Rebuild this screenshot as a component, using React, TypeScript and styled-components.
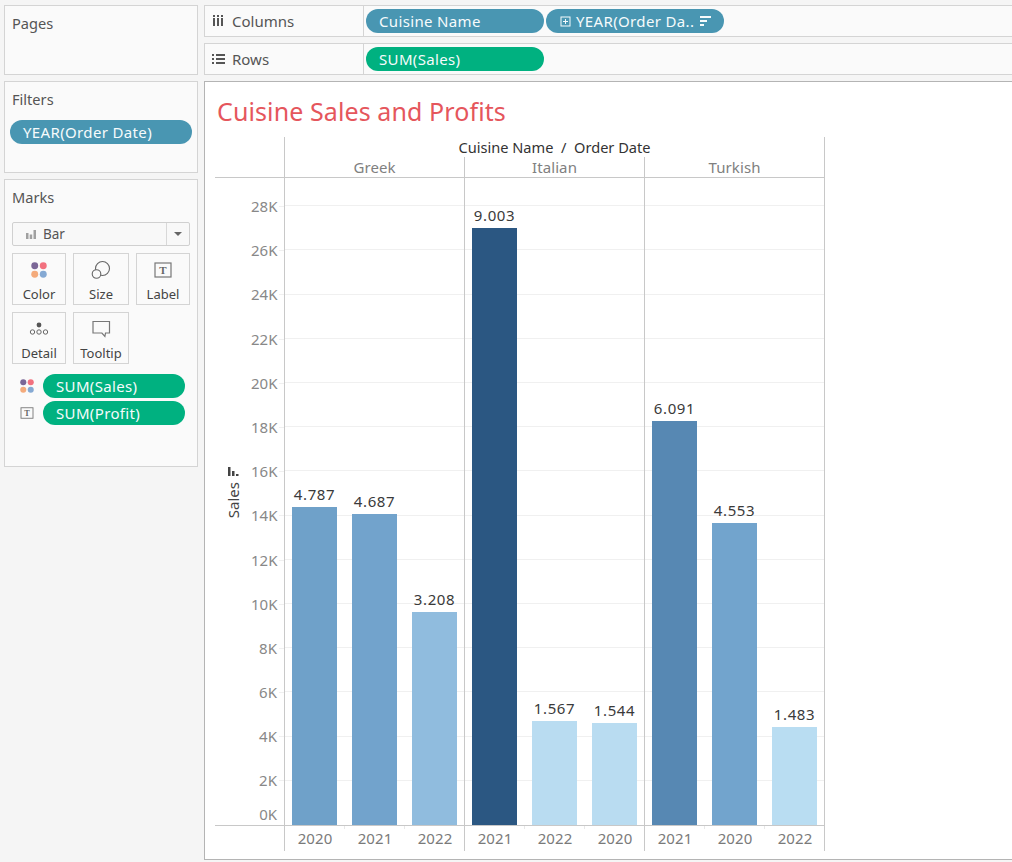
import React from "react";
import styled, { createGlobalStyle } from "styled-components";

const Global = createGlobalStyle`
  html, body { margin: 0; padding: 0; background: #f5f5f5; overflow: hidden; }
  body { font-family: "Noto Sans", "Open Sans", Arial, sans-serif; width: 1012px; height: 862px; }
  * { box-sizing: border-box; }
`;

const Page = styled.div`
  display: grid;
  grid-template-columns: 194px 812px;
  column-gap: 6px;
  padding: 5px 0 0 4px;
  width: 1012px;
  height: 862px;
  overflow: hidden;
  background: #f5f5f5;
`;
const Side = styled.div`
  display: flex;
  flex-direction: column;
`;
const Main = styled.div`
  display: flex;
  flex-direction: column;
`;
const Card = styled.section<{ $h: number; $mb: number }>`
  height: ${(p) => p.$h}px;
  margin-bottom: ${(p) => p.$mb}px;
  background: #fafafa;
  border: 1px solid #d4d4d4;
  padding: 7px 7px 0 7px;
`;
const CardTitle = styled.div`
  font-size: 14.6px;
  line-height: 20px;
  color: #555;
`;
const FilterPill = styled.div`
  margin: 11px 0 0 -2px;
  width: 182px;
  height: 24px;
  border-radius: 12px;
  background: #4996b2;
  color: #f6fbfc;
  font-size: 15px;
  letter-spacing: 0.35px;
  line-height: 24px;
  padding-left: 13px;
`;
const Dropdown = styled.div`
  margin-top: 15px;
  width: 178px;
  height: 24px;
  background: #f8f8f8;
  border: 1px solid #d0d0d0;
  border-radius: 2px;
  display: flex;
  align-items: center;
  font-size: 13.5px;
  color: #555;
`;
const DropLabel = styled.div`
  flex: 1;
  display: flex;
  align-items: center;
  gap: 7px;
  padding-left: 13px;
  height: 100%;
  border-right: 1px solid #d8d8d8;
`;
const DropArrow = styled.div`
  width: 22px;
  display: flex;
  justify-content: center;
  &::after {
    content: "";
    border-left: 4px solid transparent;
    border-right: 4px solid transparent;
    border-top: 4px solid #666;
  }
`;
const MarkGrid = styled.div`
  margin-top: 7px;
  display: grid;
  grid-template-columns: 54px 56px 54px;
  grid-auto-rows: 52px;
  gap: 7px;
`;
const MarkBtn = styled.div`
  border: 1px solid #d4d4d4;
  background: #fafafa;
  display: flex;
  flex-direction: column;
  align-items: center;
  padding-top: 6px;
  font-size: 13px;
  line-height: 16px;
  color: #444;
  svg { height: 20px; margin-bottom: 6px; display: block; }
`;
const MarkRows = styled.div`
  margin-top: 10px;
  display: flex;
  flex-direction: column;
  gap: 3px;
`;
const MarkRow = styled.div`
  display: flex;
  align-items: center;
  height: 24px;
  padding-left: 7px;
`;
const MarkIcon = styled.div`
  width: 16px;
  margin-right: 8px;
  display: flex;
  justify-content: center;
`;
const Pill = styled.div<{ $kind: "dim" | "mea"; $w?: number }>`
  width: ${(p) => p.$w ?? 178}px;
  height: 24px;
  border-radius: 12px;
  background: ${(p) => (p.$kind === "dim" ? "#4996b2" : "#00b180")};
  color: #f6fbfc;
  font-size: 15px;
  letter-spacing: 0.35px;
  line-height: 24px;
  padding-left: 13px;
  display: flex;
  align-items: center;
  white-space: nowrap;
`;
const Shelf = styled.div<{ $mb: number }>`
  height: 32px;
  margin-bottom: ${(p) => p.$mb}px;
  background: #fafafa;
  border: 1px solid #d4d4d4;
  border-right: none;
  display: flex;
  align-items: center;
`;
const ShelfHead = styled.div`
  width: 159px;
  height: 100%;
  border-right: 1px solid #d4d4d4;
  display: flex;
  align-items: center;
  padding-left: 7px;
  font-size: 15px;
  color: #555;
`;
const ShelfIcon = styled.span`
  width: 20px;
  display: flex;
`;
const ShelfPills = styled.div`
  display: flex;
  gap: 2px;
  padding-left: 2px;
`;
const View = styled.div`
  height: 779px;
  background: #fff;
  border: 1px solid #b4b4b4;
  border-right: none;
  padding: 12px 0 0 10px;
`;
const Title = styled.h1`
  margin: 0 0 0 2px;
  height: 43px;
  font-size: 25px;
  letter-spacing: 0.1px;
  line-height: 34px;
  font-weight: 400;
  color: #e5565c;
`;
const Chart = styled.div`
  width: 610px;
  display: grid;
  grid-template-columns: 70px repeat(3, 180px);
`;
const HeadSpacer = styled.div`
  grid-row: 1 / span 2;
  border-right: 1px solid #c8c8c8;
  border-bottom: 1px solid #c8c8c8;
`;
const FieldHead = styled.div`
  grid-column: 2 / span 3;
  height: 20px;
  text-align: center;
  font-size: 14.6px;
  line-height: 21px;
  color: #333;
  border-right: 1px solid #c8c8c8;
`;
const PaneHead = styled.div`
  height: 21px;
  text-align: center;
  font-size: 15px;
  letter-spacing: 0.1px;
  line-height: 20px;
  color: #808080;
  border-right: 1px solid #c8c8c8;
  border-bottom: 1px solid #c8c8c8;
`;
const AxisCell = styled.div`
  height: 648px;
  display: flex;
  border-right: 1px solid #c8c8c8;
  border-bottom: 1px solid #c8c8c8;
`;
const AxisTitle = styled.div`
  width: 36px;
  display: flex;
  align-items: center;
  justify-content: center;
  flex-direction: column-reverse;
  padding-bottom: 18px;
  gap: 6px;
  font-size: 15px;
  color: #444;
  span { writing-mode: vertical-rl; transform: rotate(180deg); line-height: 16px; }
`;
const Ticks = styled.div`
  width: 33px;
  padding-top: 6px;
`;
const Tick = styled.div<{ $last?: boolean }>`
  height: ${(p) => (p.$last ? 22 : 44.2)}px;
  line-height: ${(p) => (p.$last ? 22 : 44.2)}px;
  position: relative;
  padding-right: 7px;
  text-align: right;
  font-size: 15px;
  color: #888;
  white-space: nowrap;
  &::after {
    content: "";
    display: ${(p) => (p.$last ? "none" : "block")};
    position: absolute;
    right: 0;
    top: 22px;
    width: 5px;
    height: 1px;
    background: #f0f0f0;
  }
`;
const Pane = styled.div`
  height: 648px;
  display: flex;
  align-items: flex-end;
  gap: 15px;
  padding: 0 7px 0 7px;
  border-right: 1px solid #c8c8c8;
  border-bottom: 1px solid #c8c8c8;
  background-color: #fff;
  background-image: repeating-linear-gradient(
    to top,
    transparent 0,
    transparent 43.2px,
    #f0f0f0 43.2px,
    #f0f0f0 44.2px
  );
  background-position: 0 -1px;
  background-size: 100% 100%;
`;
const BarCol = styled.div`
  width: 45px;
  display: flex;
  flex-direction: column;
  align-items: center;
`;
const BarValue = styled.div`
  font-size: 15px;
  letter-spacing: 0.6px;
  line-height: 20px;
  margin-bottom: 3px;
  color: #3a3a3a;
`;
const Bar = styled.div`
  width: 45px;
`;
const FootSpacer = styled.div`
  border-right: 1px solid #c8c8c8;
`;
const Foot = styled.div`
  height: 25px;
  display: grid;
  grid-template-columns: repeat(3, 60px);
  border-right: 1px solid #c8c8c8;
`;
const FootLabel = styled.div`
  text-align: center;
  font-size: 15px;
  letter-spacing: 0.1px;
  line-height: 25px;
  color: #7a7a7a;
  position: relative;
  &:not(:last-child)::after {
    content: "";
    position: absolute;
    right: 0;
    top: 0;
    width: 1px;
    height: 3px;
    background: #e8e8e8;
  }
`;

const ColorDots = ({ s = 16 }: { s?: number }) => (
  <svg width={s} height={s} viewBox="0 0 18 18">
    <circle cx="4.200" cy="4.200" r="3.900" fill="#7b6797" />
    <circle cx="13.800" cy="4.200" r="3.900" fill="#f2717f" />
    <circle cx="4.200" cy="13.800" r="3.900" fill="#f4ab7c" />
    <circle cx="13.800" cy="13.800" r="3.900" fill="#85a9d3" />
  </svg>
);
const TextBox = ({ w, h }: { w: number; h: number }) => (
  <svg width={w} height={h} viewBox="0 0 18 16">
    <rect x="1" y="1" width="16" height="14" fill="none" stroke="#777" strokeWidth="1.2" />
    <text x="9" y="12" textAnchor="middle" fontFamily="'Liberation Serif', serif" fontWeight="700" fontSize="11" fill="#666">T</text>
  </svg>
);

const fmtTicks = [28, 26, 24, 22, 20, 18, 16, 14, 12, 10, 8, 6, 4, 2];
const panes = [
  { name: "Greek", bars: [
    { y: "2020", v: "4.787", h: 318, c: "#6fa1c9" },
    { y: "2021", v: "4.687", h: 311, c: "#72a3cc" },
    { y: "2022", v: "3.208", h: 213, c: "#90bcde" },
  ] },
  { name: "Italian", bars: [
    { y: "2021", v: "9.003", h: 597, c: "#2b5782" },
    { y: "2022", v: "1.567", h: 104, c: "#b9dcf1" },
    { y: "2020", v: "1.544", h: 102, c: "#b9dcf1" },
  ] },
  { name: "Turkish", bars: [
    { y: "2021", v: "6.091", h: 404, c: "#5788b3" },
    { y: "2020", v: "4.553", h: 302, c: "#72a4cd" },
    { y: "2022", v: "1.483", h: 98, c: "#b9ddf2" },
  ] },
];

export default function App() {
  return (
    <Page>
      <Global />
      <Side>
        <Card $h={70} $mb={6}><CardTitle>Pages</CardTitle></Card>
        <Card $h={92} $mb={6}>
          <CardTitle>Filters</CardTitle>
          <FilterPill>YEAR(Order Date)</FilterPill>
        </Card>
        <Card $h={288} $mb={0}>
          <CardTitle>Marks</CardTitle>
          <Dropdown>
            <DropLabel>
              <svg width="10" height="10" viewBox="0 0 10 10"><path d="M0 4h2.500v6H0zM3.700 5.500h2.500V10H3.700zM7.500 1H10v9H7.500z" fill="#a0a0a0" /></svg>
              Bar
            </DropLabel>
            <DropArrow />
          </Dropdown>
          <MarkGrid>
            <MarkBtn><ColorDots />Color</MarkBtn>
            <MarkBtn>
              <svg width="20" height="20" viewBox="0 0 20 20" fill="none" stroke="#666" strokeWidth="1.1">
                <circle cx="11.500" cy="8.500" r="7" />
                <circle cx="5.500" cy="14" r="4.300" fill="#fafafa" />
              </svg>
              Size
            </MarkBtn>
            <MarkBtn><TextBox w={18} h={16} />Label</MarkBtn>
            <MarkBtn>
              <svg width="20" height="20" viewBox="0 0 20 20" fill="none" stroke="#666" strokeWidth="1">
                <circle cx="10" cy="6" r="2.400" fill="#555" stroke="none" />
                <circle cx="3.500" cy="13" r="2.200" />
                <circle cx="10" cy="13" r="2.200" />
                <circle cx="16.500" cy="13" r="2.200" />
              </svg>
              Detail
            </MarkBtn>
            <MarkBtn>
              <svg width="20" height="20" viewBox="0 0 20 20" fill="none" stroke="#777" strokeWidth="1.2">
                <path d="M2 2.500h16.500v11.500h-4l-.6 3.500-3-3.500H2z" />
              </svg>
              Tooltip
            </MarkBtn>
          </MarkGrid>
          <MarkRows>
            <MarkRow>
              <MarkIcon><ColorDots s={14} /></MarkIcon>
              <Pill $kind="mea" $w={142}>SUM(Sales)</Pill>
            </MarkRow>
            <MarkRow>
              <MarkIcon><TextBox w={14} h={12} /></MarkIcon>
              <Pill $kind="mea" $w={142}>SUM(Profit)</Pill>
            </MarkRow>
          </MarkRows>
        </Card>
      </Side>
      <Main>
        <Shelf $mb={6}>
          <ShelfHead>
            <ShelfIcon>
              <svg width="12" height="12" viewBox="0 0 12 12" fill="#555"><path d="M1 0h2v2H1zM1 3h2v8H1zM5 0h2v2H5zM5 3h2v8H5zM9 0h2v2H9zM9 3h2v8H9z" /></svg>
            </ShelfIcon>
            Columns
          </ShelfHead>
          <ShelfPills>
            <Pill $kind="dim">Cuisine Name</Pill>
            <Pill $kind="dim">
              <svg width="11" height="11" viewBox="0 0 11 11" fill="none" stroke="#f6fbfc" strokeWidth="1" style={{ marginLeft: 1, marginRight: 5 }}>
                <rect x="1" y="1" width="9" height="9" /><path d="M3 5.500h5M5.500 3v5" />
              </svg>
              YEAR(Order Da..
              <svg width="11" height="10" viewBox="0 0 11 10" fill="#f6fbfc" style={{ marginLeft: 6 }}><path d="M0 0h11v2H0zM0 4h7v2H0zM0 8h4v2H0z" /></svg>
            </Pill>
          </ShelfPills>
        </Shelf>
        <Shelf $mb={6}>
          <ShelfHead>
            <ShelfIcon>
              <svg width="13" height="11" viewBox="0 0 13 11" fill="#555"><path d="M0 0h2v2H0zM4 0h9v2H4zM0 4h2v2H0zM4 4h9v2H4zM0 8h2v2H0zM4 8h9v2H4z" /></svg>
            </ShelfIcon>
            Rows
          </ShelfHead>
          <ShelfPills>
            <Pill $kind="mea">SUM(Sales)</Pill>
          </ShelfPills>
        </Shelf>
        <View>
          <Title>Cuisine Sales and Profits</Title>
          <Chart>
            <HeadSpacer />
            <FieldHead>Cuisine Name&nbsp;&nbsp;/&nbsp;&nbsp;Order Date</FieldHead>
            {panes.map((p) => <PaneHead key={p.name}>{p.name}</PaneHead>)}
            <AxisCell>
              <AxisTitle>
                <span>Sales</span>
                <svg width="11" height="9" viewBox="0 0 11 9" fill="#444"><path d="M0 0h2.500v9H0zM4 4h2.500v5H4zM8 7h2.500v2H8z" /></svg>
              </AxisTitle>
              <Ticks>
                {fmtTicks.map((t) => <Tick key={t}>{t}K</Tick>)}
                <Tick $last>0K</Tick>
              </Ticks>
            </AxisCell>
            {panes.map((p) => (
              <Pane key={p.name}>
                {p.bars.map((b) => (
                  <BarCol key={b.y}>
                    <BarValue>{b.v}</BarValue>
                    <Bar style={{ height: b.h, background: b.c }} />
                  </BarCol>
                ))}
              </Pane>
            ))}
            <FootSpacer />
            {panes.map((p) => (
              <Foot key={p.name}>
                {p.bars.map((b) => <FootLabel key={b.y}>{b.y}</FootLabel>)}
              </Foot>
            ))}
          </Chart>
        </View>
      </Main>
    </Page>
  );
}
